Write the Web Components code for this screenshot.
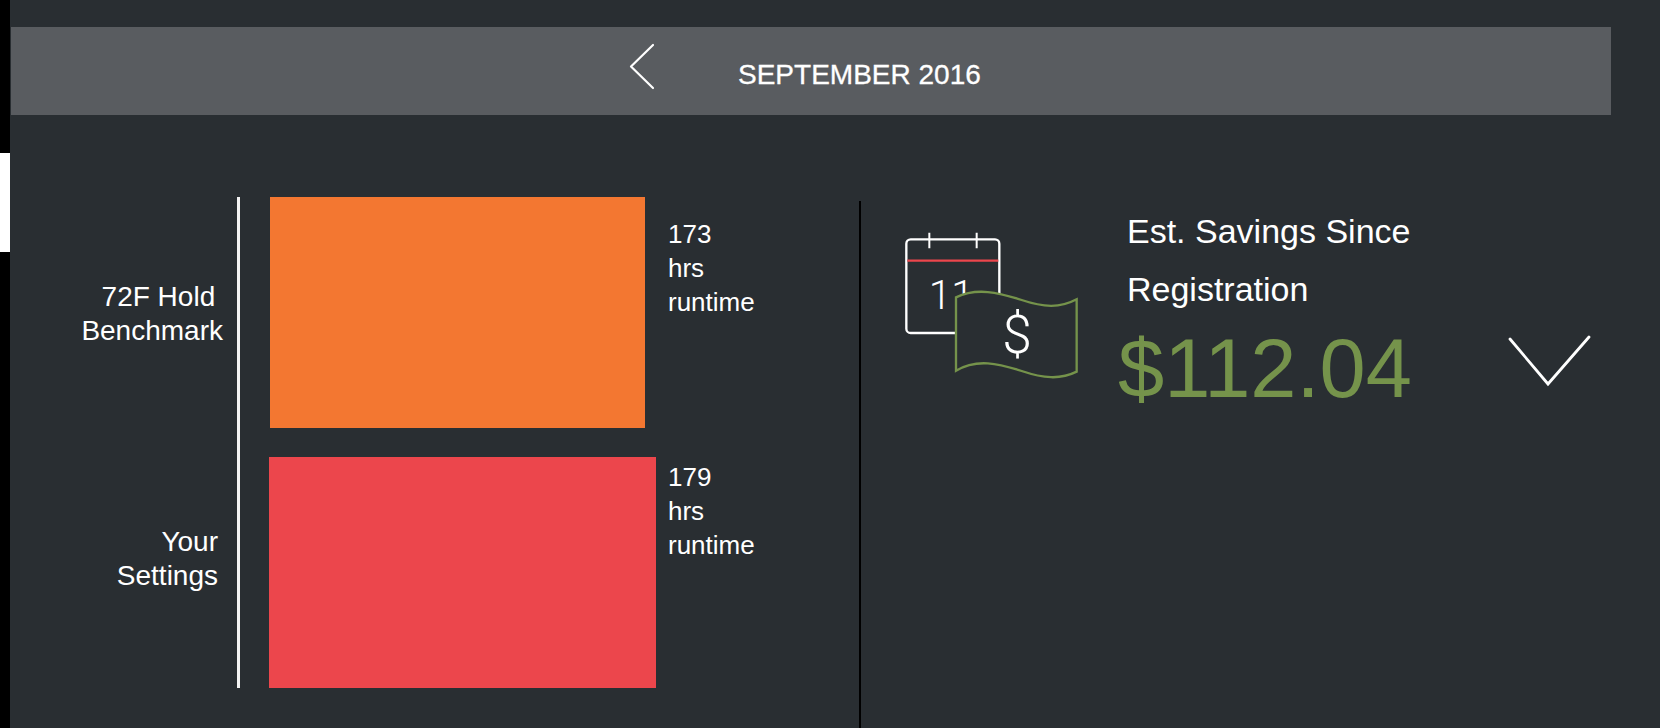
<!DOCTYPE html>
<html>
<head>
<meta charset="utf-8">
<title>Runtime report</title>
<style>
  html, body { margin: 0; height: 100%; background: #292e32; }
  body { font-family: "Liberation Sans", Arial, sans-serif; color: #fff; overflow: hidden; }
</style>
</head>
<body>
<report-shell>
  <month-bar>SEPTEMBER 2016</month-bar>
  <runtime-chart slot="chart">
    <runtime-row hours="173" bar="#f37731" style="--bar-left:30px;--bar-width:375px;--label-top:83px;--label-end:14px;--value-top:20px;--row-gap:29px">72F Hold&nbsp;<br>Benchmark</runtime-row>
    <runtime-row hours="179" bar="#ec464c" style="--bar-left:29px;--bar-width:387px;--label-top:68px;--label-end:19px;--value-top:3px;--row-gap:0px">Your<br>Settings</runtime-row>
  </runtime-chart>
  <savings-panel slot="savings" amount="$112.04">Est. Savings Since Registration</savings-panel>
</report-shell>

<script>
// outer frame: the dark strip on the left, the month bar, then two columns
class ReportShell extends HTMLElement {
  constructor() {
    super();
    let shadowRoot = this.attachShadow({mode: 'open'});
    shadowRoot.innerHTML = `
      <style>
        :host { display: flex; width: 1660px; height: 728px; background: #292e32; }
        .strip { width: 10px; flex: none; background: #000; padding-top: 153px; box-sizing: border-box; }
        .strip div { height: 99px; background: #fff; }
        main { flex: 1; padding: 27px 0 0 1px; min-width: 0; }
        .columns { display: flex; margin-top: 82px; height: 531px; }
        .columns ::slotted(runtime-chart) { width: 848px; flex: none; }
        .rule { width: 2px; flex: none; background: #000; margin-top: 4px; }
      </style>
      <div class="strip"><div></div></div>
      <main>
        <slot></slot>
        <div class="columns">
          <slot name="chart"></slot>
          <div class="rule"></div>
          <slot name="savings"></slot>
        </div>
      </main>
    `;
  }
}

class MonthBar extends HTMLElement {
  constructor() {
    super();
    let shadowRoot = this.attachShadow({mode: 'open'});
    shadowRoot.innerHTML = `
      <style>
        :host {
          display: flex;
          align-items: center;
          width: 1600px;
          height: 88px;
          box-sizing: border-box;
          padding-left: 618px;
          background: #595c60;
          font-size: 28px;
        }
        svg { width: 26px; height: 48px; display: block; margin-right: 83px; margin-bottom: 8px; }
        span { position: relative; top: 4px; -webkit-text-stroke: 0.3px #fff; }
      </style>
      <svg viewBox="0 0 26 48" fill="none" stroke="#fff" stroke-width="2.2" stroke-linecap="round" stroke-linejoin="round">
        <path d="M24 2 L2 23.5 L24 45"/>
      </svg>
      <span><slot></slot></span>
    `;
  }
}

class RuntimeChart extends HTMLElement {
  constructor() {
    super();
    let shadowRoot = this.attachShadow({mode: 'open'});
    shadowRoot.innerHTML = `
      <style>
        :host { display: block; font-size: 26px; line-height: 34px; }
      </style>
      <slot></slot>
    `;
  }
}

class RuntimeRow extends HTMLElement {
  static get observedAttributes() {
    return ['hours', 'bar'];
  }

  constructor() {
    super();
    let shadowRoot = this.attachShadow({mode: 'open'});
    shadowRoot.innerHTML = `
      <style>
        :host { display: grid; grid-template-columns: 226px 431px auto; }
        .label {
          padding-top: var(--label-top);
          padding-right: var(--label-end);
          text-align: right;
          font-size: 28px;
          white-space: nowrap;
        }
        .track {
          border-left: 3px solid #f3f3f3;
          padding-left: var(--bar-left);
          padding-bottom: var(--row-gap);
          box-sizing: border-box;
        }
        .bar { width: var(--bar-width); height: 231px; }
        .value { padding-top: var(--value-top); }
      </style>
      <div class="label"><slot></slot></div>
      <div class="track"><div class="bar"></div></div>
      <div class="value"><span id="hours"></span><br>hrs<br>runtime</div>
    `;
  }

  attributeChangedCallback(attr, oldValue, newValue) {
    if (attr === 'hours') {
      this.shadowRoot.getElementById('hours').textContent = newValue;
    } else {
      this.shadowRoot.querySelector('.bar').style.background = newValue;
    }
  }
}

class SavingsPanel extends HTMLElement {
  static get observedAttributes() {
    return ['amount'];
  }

  constructor() {
    super();
    let shadowRoot = this.attachShadow({mode: 'open'});
    shadowRoot.innerHTML = `
      <style>
        :host { display: flex; flex: 1; align-items: flex-start; padding-left: 19px; }
        .icon { width: 220px; height: 180px; flex: none; display: block; margin-top: 13px; }
        .copy { width: 381px; flex: none; margin-left: 27px; padding-top: 5px; }
        .title { font-size: 34px; line-height: 58px; width: 300px; }
        .amount { font-size: 83px; line-height: 84px; color: #75934b; margin-left: -9px; margin-top: 9px; }
        .more { width: 84px; height: 52px; flex: none; display: block; margin-top: 138px; }
      </style>
      <svg class="icon" viewBox="0 0 660 540" fill="none">
        <rect x="79" y="88" width="279" height="281" rx="13" stroke="#fff" stroke-width="7"/>
        <path d="M148 68V115M290 68V115" stroke="#fff" stroke-width="6"/>
        <path d="M82 152H355" stroke="#ec464c" stroke-width="7"/>
        <text x="214" y="298" text-anchor="middle" fill="#fff" font-family="Roboto" font-weight="300" font-size="122">11</text>
        <path d="M228 262 C290 232 355 247 425 270 C490 292 540 295 590 268 V485 C540 510 490 505 425 483 C355 460 290 445 228 482 Z" fill="#292e32" stroke="#75934b" stroke-width="7"/>
        <text x="411" y="428" text-anchor="middle" fill="#fff" font-family="Roboto" font-weight="300" font-size="160">$</text>
      </svg>
      <div class="copy">
        <div class="title"><slot></slot></div>
        <div class="amount"></div>
      </div>
      <svg class="more" viewBox="0 0 84 52" fill="none" stroke="#fff" stroke-width="2.8" stroke-linecap="round" stroke-linejoin="miter">
        <path d="M2 4 L40 49 L81 2"/>
      </svg>
    `;
  }

  attributeChangedCallback(attr, oldValue, newValue) {
    this.shadowRoot.querySelector('.amount').textContent = newValue;
  }
}

customElements.define('report-shell', ReportShell);
customElements.define('month-bar', MonthBar);
customElements.define('runtime-chart', RuntimeChart);
customElements.define('runtime-row', RuntimeRow);
customElements.define('savings-panel', SavingsPanel);
</script>
</body>
</html>
